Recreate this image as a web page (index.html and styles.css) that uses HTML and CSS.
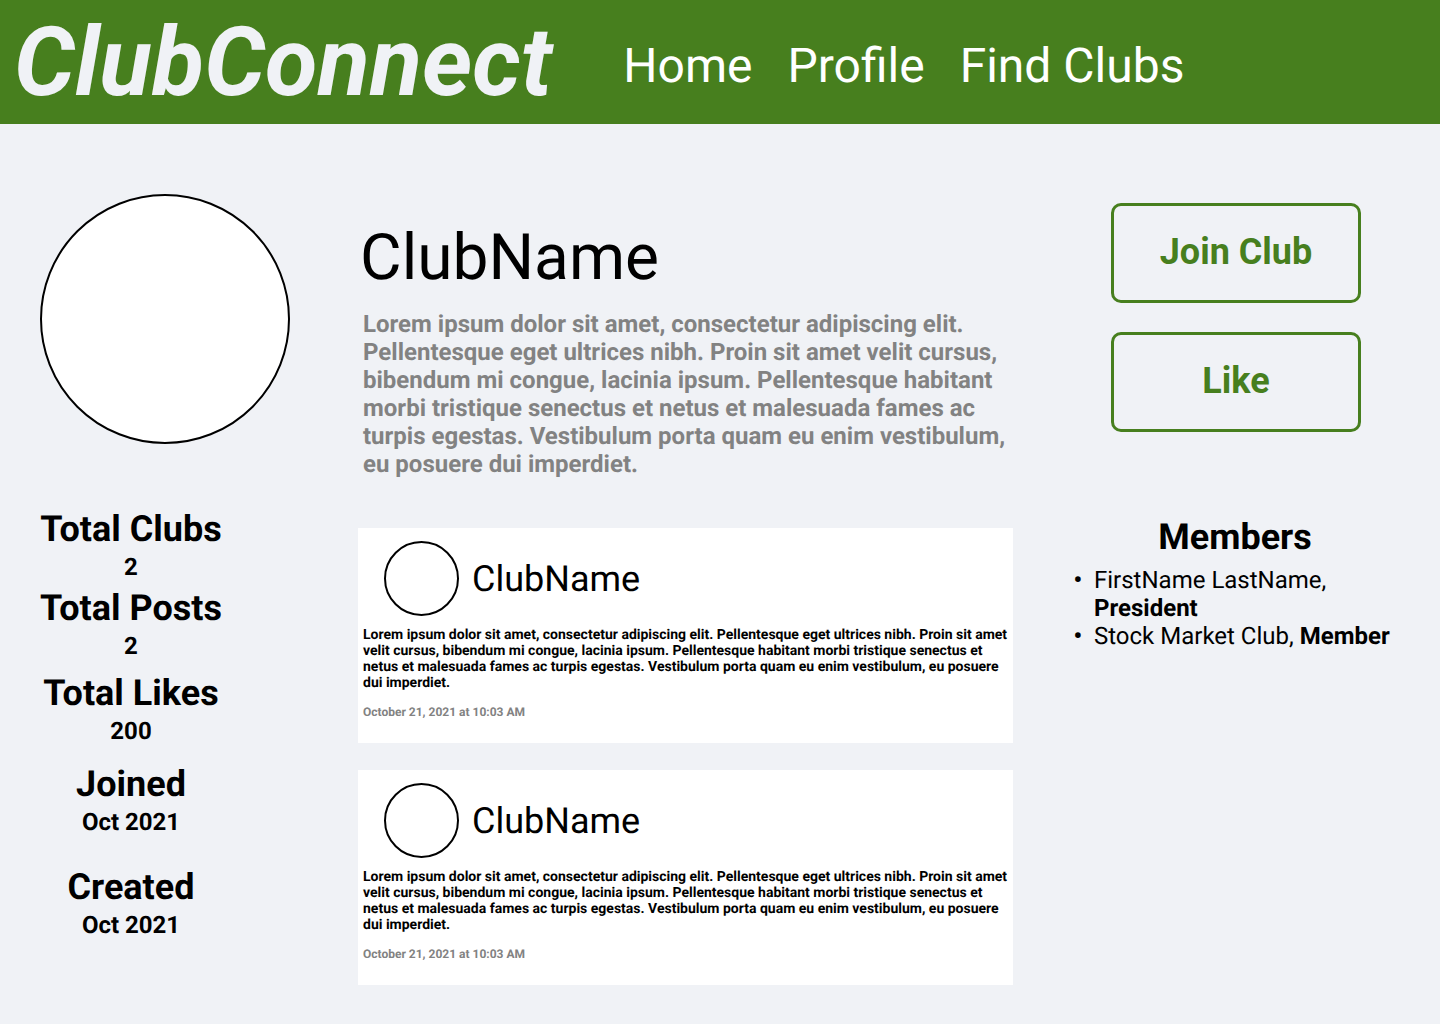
FILE: index.html
```html
<!DOCTYPE html>
<html lang="en">
<head>
  <meta charset="utf-8">
  <meta name="viewport" content="width=device-width, initial-scale=1">
  <title>ClubConnect</title>
  <link rel="stylesheet" href="styles.css">
</head>
<body>
  <header class="site-header">
    <a class="logo" href="#">ClubConnect</a>
    <nav class="site-nav">
      <a href="#">Home</a>
      <a href="#">Profile</a>
      <a href="#">Find Clubs</a>
    </nav>
  </header>
  <main class="layout">
    <aside class="summary">
      <div class="avatar avatar-large"></div>
      <dl class="stats">
        <div class="stat"><dt>Total Clubs</dt><dd>2</dd></div>
        <div class="stat"><dt>Total Posts</dt><dd>2</dd></div>
        <div class="stat"><dt>Total Likes</dt><dd>200</dd></div>
        <div class="stat"><dt>Joined</dt><dd>Oct 2021</dd></div>
        <div class="stat"><dt>Created</dt><dd>Oct 2021</dd></div>
      </dl>
    </aside>
    <section class="club">
      <h1 class="club-name">ClubName</h1>
      <p class="club-bio">Lorem ipsum dolor sit amet, consectetur adipiscing elit. Pellentesque eget ultrices nibh. Proin sit amet velit cursus, bibendum mi congue, lacinia ipsum. Pellentesque habitant morbi tristique senectus et netus et malesuada fames ac turpis egestas. Vestibulum porta quam eu enim vestibulum, eu posuere dui imperdiet.</p>
      <div class="posts">
        <article class="post">
          <div class="post-head">
            <div class="avatar avatar-small"></div>
            <h2 class="post-author">ClubName</h2>
          </div>
          <p class="post-text">Lorem ipsum dolor sit amet, consectetur adipiscing elit. Pellentesque eget ultrices nibh. Proin sit amet velit cursus, bibendum mi congue, lacinia ipsum. Pellentesque habitant morbi tristique senectus et netus et malesuada fames ac turpis egestas. Vestibulum porta quam eu enim vestibulum, eu posuere dui imperdiet.</p>
          <time class="post-date" datetime="2021-10-21T10:03">October 21, 2021 at 10:03 AM</time>
        </article>
        <article class="post">
          <div class="post-head">
            <div class="avatar avatar-small"></div>
            <h2 class="post-author">ClubName</h2>
          </div>
          <p class="post-text">Lorem ipsum dolor sit amet, consectetur adipiscing elit. Pellentesque eget ultrices nibh. Proin sit amet velit cursus, bibendum mi congue, lacinia ipsum. Pellentesque habitant morbi tristique senectus et netus et malesuada fames ac turpis egestas. Vestibulum porta quam eu enim vestibulum, eu posuere dui imperdiet.</p>
          <time class="post-date" datetime="2021-10-21T10:03">October 21, 2021 at 10:03 AM</time>
        </article>
      </div>
    </section>
    <aside class="side">
      <div class="actions">
        <button class="action" type="button">Join Club</button>
        <button class="action" type="button">Like</button>
      </div>
      <h2 class="members-title">Members</h2>
      <ul class="members">
        <li>FirstName LastName, <strong>President</strong></li>
        <li>Stock Market Club, <strong>Member</strong></li>
      </ul>
    </aside>
  </main>
</body>
</html>
```
FILE: styles.css
```css
* {
  box-sizing: border-box;
}

body {
  margin: 0;
  background: #f0f2f6;
  color: #000;
  font-family: Roboto, "Liberation Sans", sans-serif;
  text-rendering: geometricPrecision;
}

h1, h2, p, dl, dd, ul {
  margin: 0;
  padding: 0;
}

.site-header {
  display: flex;
  align-items: center;
  gap: 71px;
  padding: 7px 14px 5px;
  background: #477f1e;
}

.logo {
  color: #f0f2f6;
  font-size: 96px;
  font-style: italic;
  font-weight: 700;
  line-height: 112px;
  text-decoration: none;
}

.site-nav {
  display: flex;
  gap: 35px;
  padding-top: 6px;
}

.site-nav a {
  color: #fff;
  font-size: 48px;
  line-height: 56px;
  text-decoration: none;
}

.layout {
  display: grid;
  grid-template-columns: 261px minmax(0, 1fr) 330px;
  column-gap: 57px;
  padding: 70px 40px 39px;
}

.avatar {
  flex: none;
  border: 2px solid #000;
  border-radius: 50%;
  background: #fff;
}

.avatar-large {
  width: 250px;
  height: 250px;
}

.avatar-small {
  width: 75px;
  height: 75px;
}

.stats {
  width: 182px;
  padding-top: 64px;
  text-align: center;
  font-weight: 700;
}

.stat dt {
  font-size: 36px;
  line-height: 42px;
}

.stat dd {
  padding-top: 3px;
  font-size: 24px;
  line-height: 28px;
}

.stat:nth-child(2) { margin-top: 6px; }
.stat:nth-child(3) { margin-top: 12px; }
.stat:nth-child(4) { margin-top: 18px; }
.stat:nth-child(5) { margin-top: 30px; }

.club-name {
  padding: 26px 2px 15px;
  font-size: 64px;
  font-weight: 400;
  line-height: 75px;
}

.club-bio {
  padding: 0 5px;
  color: #828282;
  font-size: 24px;
  font-weight: 700;
  line-height: 28px;
}

.posts {
  display: grid;
  gap: 27px;
  padding-top: 50px;
}

.post {
  padding: 13px 5px 24px;
  background: #fff;
}

.post-head {
  display: flex;
  align-items: center;
  gap: 13px;
  padding: 0 21px 11px;
}

.post-author {
  font-size: 36px;
  font-weight: 400;
  line-height: 42px;
}

.post-text {
  font-size: 14px;
  font-weight: 700;
  line-height: 16px;
}

.post-date {
  display: block;
  padding-top: 14px;
  color: #828282;
  font-size: 12px;
  font-weight: 700;
  line-height: 14px;
}

.actions {
  display: grid;
  justify-content: center;
  gap: 29px;
  padding: 9px 0 0 2px;
}

.action {
  width: 250px;
  height: 100px;
  padding: 0 0 2px;
  border: 3px solid #477f1e;
  border-radius: 10px;
  background: transparent;
  color: #477f1e;
  font: 700 36px/42px Roboto, "Liberation Sans", sans-serif;
  cursor: pointer;
}

.members-title {
  padding: 84px 0 8px;
  font-size: 36px;
  font-weight: 700;
  line-height: 42px;
  text-align: center;
}

.members {
  padding-left: 24px;
  font-size: 24px;
  line-height: 28px;
  list-style-type: "•\00a0\00a0";
}

.members li::marker {
  font-weight: 700;
}
```
